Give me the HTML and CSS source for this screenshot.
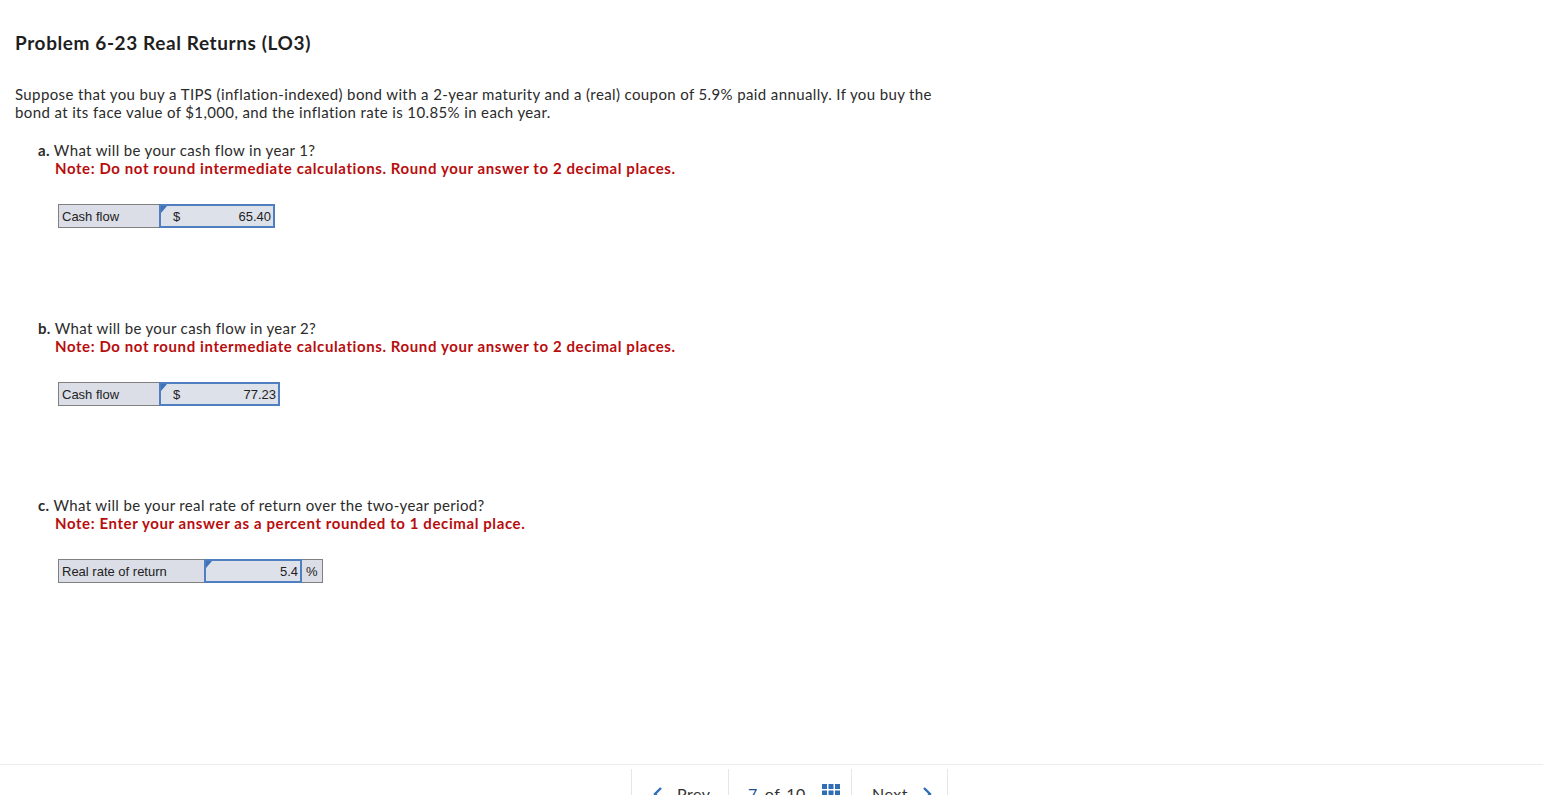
FILE: index.html
```html
<!DOCTYPE html>
<html>
<head>
<meta charset="utf-8">
<title>Problem 6-23 Real Returns (LO3)</title>
<link rel="stylesheet" href="styles.css">
</head>
<body>
<div class="page">
  <h1 class="title">Problem 6-23 Real Returns (LO3)</h1>
  <p class="intro">Suppose that you buy a TIPS (inflation-indexed) bond with a 2-year maturity and a (real) coupon of 5.9% paid annually. If you buy the bond at its face value of $1,000, and the inflation rate is 10.85% in each year.</p>

  <div class="part part-a">
    <div class="question"><b>a.</b> What will be your cash flow in year 1?</div>
    <div class="note">Note: Do not round intermediate calculations. Round your answer to 2 decimal places.</div>
    <div class="answer">
      <div class="label lbl-cash">Cash flow</div>
      <div class="input in-a"><span class="cur">$</span><span class="val">65.40</span></div>
    </div>
  </div>

  <div class="part part-b">
    <div class="question"><b>b.</b> What will be your cash flow in year 2?</div>
    <div class="note">Note: Do not round intermediate calculations. Round your answer to 2 decimal places.</div>
    <div class="answer">
      <div class="label lbl-cash">Cash flow</div>
      <div class="input in-b"><span class="cur">$</span><span class="val">77.23</span></div>
    </div>
  </div>

  <div class="part part-c">
    <div class="question"><b>c.</b> What will be your real rate of return over the two-year period?</div>
    <div class="note">Note: Enter your answer as a percent rounded to 1 decimal place.</div>
    <div class="answer">
      <div class="label lbl-rate">Real rate of return</div>
      <div class="input in-c"><span class="val">5.4</span></div>
      <div class="unit">%</div>
    </div>
  </div>
</div>

<footer class="footer">
  <nav class="pager">
    <div class="seg seg-prev">
      <svg class="chev" width="10" height="14" viewBox="0 0 10 14"><path d="M8 1 L2 7 L8 13" fill="none" stroke="#2f6db5" stroke-width="2.4"/></svg>
      <span>Prev</span>
    </div>
    <div class="seg seg-mid">
      <span class="cur-num">7</span><span class="of">of</span><span>10</span>
      <svg class="grid" width="18" height="12" viewBox="0 0 18 12">
        <rect x="0" y="0" width="5" height="5" fill="#2f6db5"/><rect x="6.5" y="0" width="5" height="5" fill="#2f6db5"/><rect x="13" y="0" width="5" height="5" fill="#2f6db5"/>
        <rect x="0" y="6.5" width="5" height="5" fill="#2f6db5"/><rect x="6.5" y="6.5" width="5" height="5" fill="#2f6db5"/><rect x="13" y="6.5" width="5" height="5" fill="#2f6db5"/>
      </svg>
    </div>
    <div class="seg seg-next">
      <span>Next</span>
      <svg class="chev" width="10" height="14" viewBox="0 0 10 14"><path d="M2 1 L8 7 L2 13" fill="none" stroke="#2f6db5" stroke-width="2.4"/></svg>
    </div>
  </nav>
</footer>
</body>
</html>
```

FILE: styles.css
```css
html, body {
  margin: 0;
  padding: 0;
  background: #ffffff;
  overflow: hidden;
}
body {
  width: 1543px;
  height: 795px;
  position: relative;
  font-family: Lato, "Open Sans", sans-serif;
  color: #2b2b2b;
}
.page {
  padding: 32px 0 0 15px;
  height: 734px;
  box-sizing: border-box;
}
.title {
  margin: 0;
  font-size: 19px;
  line-height: 22px;
  font-weight: 700;
  color: #1f1f1f;
  letter-spacing: 0.6px;
}
.intro {
  margin: 31px 0 0 0;
  width: 930px;
  font-size: 15px;
  line-height: 18px;
  letter-spacing: 0.38px;
}
.part {
  padding-left: 40px;
  font-size: 15px;
  line-height: 18px;
  letter-spacing: 0.35px;
}
.part-a { margin-top: 20px; }
.part-b { margin-top: 91px; }
.part-c { margin-top: 90px; }
.question {
  text-indent: -17px;
}
.question b { font-weight: 700; }
.note {
  color: #b80d0d;
  font-weight: 700;
  letter-spacing: 0.6px;
}
.answer {
  margin-top: 27px;
  margin-left: 3px;
  display: flex;
  height: 24px;
  font-family: "Liberation Sans", Arial, sans-serif;
  font-size: 13px;
  letter-spacing: 0;
  color: #222;
}
.label {
  box-sizing: border-box;
  height: 24px;
  border: 1px solid #808080;
  border-right: none;
  background: #dbdee7;
  padding: 1px 0 0 3px;
  line-height: 22px;
}
.lbl-cash { width: 101px; }
.lbl-rate { width: 146px; }
.input {
  box-sizing: border-box;
  height: 24px;
  border: 2px solid #4f7fc0;
  background: #dde1ea;
  display: flex;
  justify-content: space-between;
  align-items: center;
  padding: 1px 2px 0 12px;
  position: relative;
}
.input::before {
  content: "";
  position: absolute;
  left: 0;
  top: 0;
  border-top: 7px solid #3f72b8;
  border-right: 6px solid transparent;
}
.in-a { width: 116px; }
.in-b { width: 121px; }
.in-c { width: 98px; justify-content: flex-end; }
.unit {
  box-sizing: border-box;
  height: 24px;
  width: 21px;
  border: 1px solid #808080;
  border-left: none;
  background: #dbdee7;
  line-height: 22px;
  padding: 1px 0 0 4px;
}
.footer {
  border-top: 1px solid #ececec;
  height: 60px;
  margin-top: 30px;
}
.pager {
  display: flex;
  margin-left: 631px;
  padding-top: 4px;
}
.seg {
  box-sizing: border-box;
  height: 56px;
  border-left: 1px solid #e6e6e6;
  display: flex;
  align-items: flex-start;
  padding-top: 15px;
  font-family: Lato, "Open Sans", sans-serif;
  font-size: 16px;
  line-height: 20px;
  color: #333;
  letter-spacing: 0.5px;
}
.seg-prev { width: 97px; padding-left: 21px; gap: 14px; }
.seg-mid { width: 123px; padding-left: 19px; }
.seg-next { width: 97px; padding-left: 20px; gap: 14px; border-right: 1px solid #e6e6e6; }
.chev { margin-top: 3px; }
.cur-num { color: #1d4f91; margin-right: 7px; }
.of { margin-right: 6px; }
.grid { margin-left: 16px; margin-top: 0; }
```
